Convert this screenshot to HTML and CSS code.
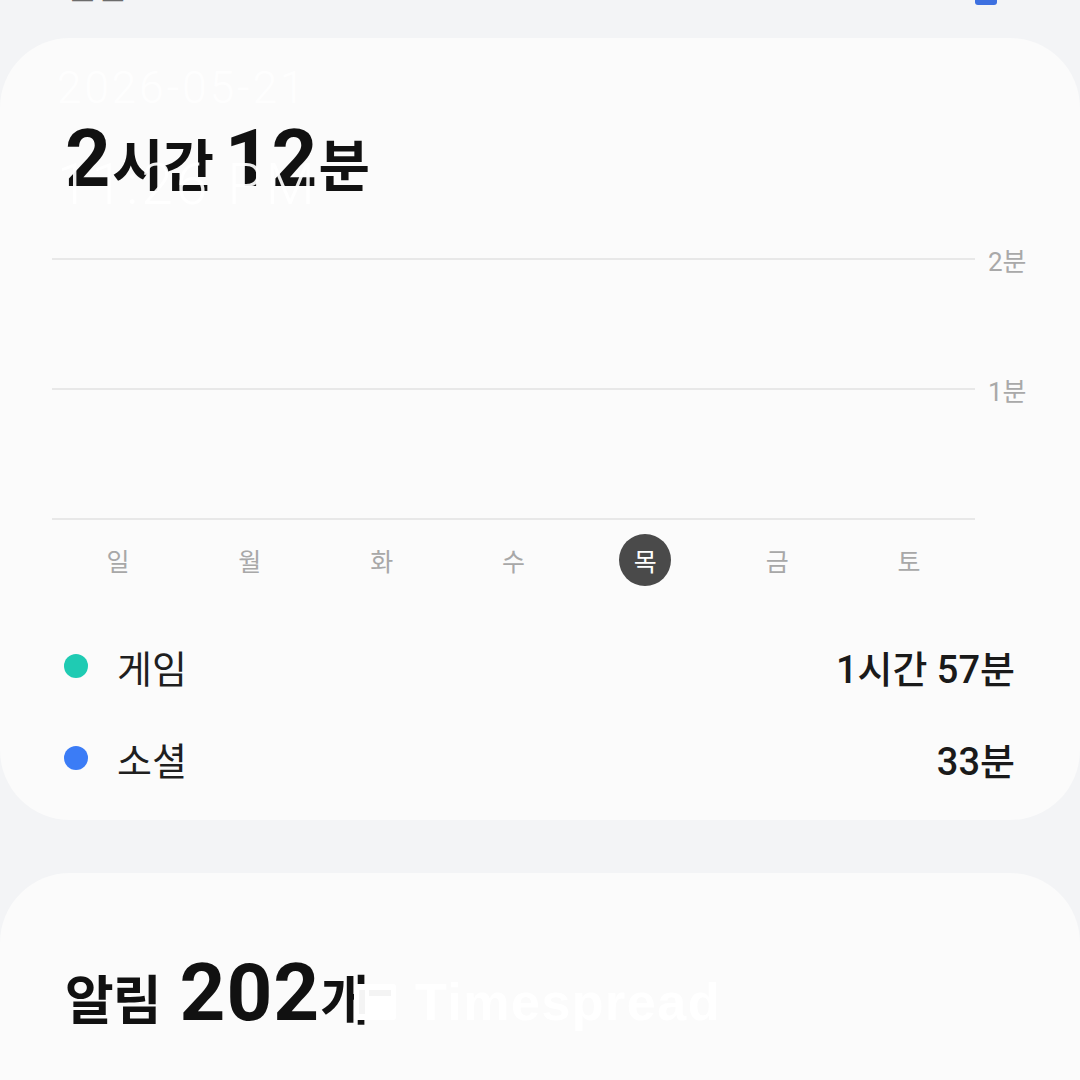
FILE: index.html
```html
<!DOCTYPE html>
<html>
	<head>
		<title>디지털 웰빙</title>
		<meta name="viewport" content="width=device-width, initial-scale=1.0"/>
		<link rel="stylesheet" href="styles.css">
	</head>
	<body>
		<header class='topbar'>
			<span class='topbar-title'>일간</span>
			<span class='topbar-icon'></span>
		</header>

		<section class='card usage'>
			<h1 class='total'><b>2</b>시간 <b>12</b>분</h1>
			<div class='chart'>
				<div class='gridrow'><span class='line'></span><span class='tick'>2분</span></div>
				<div class='gridrow'><span class='line'></span><span class='tick'>1분</span></div>
				<div class='gridrow'><span class='line'></span><span class='tick'></span></div>
			</div>
			<ul class='days'>
				<li>일</li>
				<li>월</li>
				<li>화</li>
				<li>수</li>
				<li class='today'><span>목</span></li>
				<li>금</li>
				<li>토</li>
			</ul>
			<ul class='legend'>
				<li><span class='dot game'></span><span class='name'>게임</span><span class='time'>1시간 57분</span></li>
				<li><span class='dot social'></span><span class='name'>소셜</span><span class='time'>33분</span></li>
			</ul>
		</section>

		<section class='card notes'>
			<h1 class='total'>알림 <b>202</b>개</h1>
		</section>

		<div class='stamp'>
			<div class='stamp-date'>2026-05-21</div>
			<div class='stamp-time'>11:26 PM</div>
		</div>
		<div class='brand'>
			<svg width="44" height="40" viewBox="0 0 44 40">
				<rect x="1" y="2" width="42" height="36" rx="3" fill="#ffffff"/>
				<rect x="6" y="8" width="6" height="24" fill="#f4f4f4"/>
				<rect x="16" y="8" width="22" height="6" fill="#f4f4f4"/>
			</svg>
			<span>Timespread</span>
		</div>
	</body>
</html>
```

FILE: styles.css
```css
* {
	box-sizing:border-box;
	margin:0;
	padding:0;
}
body {
	width:1080px;
	height:1080px;
	overflow:hidden;
	position:relative;
	background-color:#f3f4f6;
	font-family: Roboto, 'Noto Sans CJK KR', sans-serif;
	color:#1c1c1c;
}

.topbar {
	display:flex;
	justify-content:space-between;
	align-items:flex-end;
	height:40px;
	margin-top:-35px;
	padding:0 83px 0 65px;
}
.topbar-title {
	font-family:'Noto Sans CJK KR', sans-serif;
	font-size:34px;
	line-height:40px;
	color:#6c6c6c;
}
.topbar-icon {
	width:22px;
	height:40px;
	border-radius:3px;
	background-color:#3d70e0;
}

.card {
	background-color:#fbfbfb;
	border-radius:70px;
}
.usage {
	margin-top:33px;
	height:782px;
	padding:81px 52px 0 52px;
}

.total {
	font-family:'Noto Sans CJK KR', sans-serif;
	font-size:56px;
	font-weight:700;
	line-height:80px;
	height:80px;
	padding-left:13px;
	letter-spacing:-1px;
	color:#111;
}
.total b {
	font-family:Roboto, sans-serif;
	font-size:80px;
	font-weight:700;
	letter-spacing:1px;
}

.chart {
	display:flex;
	flex-direction:column;
	gap:100px;
	margin-top:45px;
}
.gridrow {
	display:flex;
	align-items:center;
	height:30px;
}
.line {
	flex:1;
	height:1.5px;
	background-color:#e8e8e8;
}
.tick {
	width:53px;
	padding-left:13px;
	font-size:26px;
	color:#a9a9a9;
	font-family:Roboto, 'Noto Sans CJK KR', sans-serif;
}

.days {
	list-style:none;
	display:grid;
	grid-template-columns:repeat(7, 1fr);
	width:923px;
	margin-top:0;
	height:52px;
}
.days li {
	display:flex;
	align-items:center;
	justify-content:center;
	font-family:'Noto Sans CJK KR', sans-serif;
	font-size:25px;
	color:#a8a8a8;
}
.days .today span {
	display:flex;
	align-items:center;
	justify-content:center;
	width:52px;
	height:52px;
	border-radius:50%;
	background-color:#4a4a4a;
	color:#fff;
}

.legend {
	list-style:none;
	display:flex;
	flex-direction:column;
	gap:32px;
	margin-top:50px;
	padding:0 13px 0 12px;
}
.legend li {
	display:flex;
	align-items:center;
	height:60px;
}
.dot {
	width:24px;
	height:24px;
	border-radius:50%;
	margin-right:29px;
}
.dot.game {
	background-color:#1fcbb3;
}
.dot.social {
	background-color:#3b7cf6;
}
.name {
	flex:1;
	font-family:'Noto Sans CJK KR', sans-serif;
	font-size:38px;
	color:#1f1f1f;
}
.time {
	font-family:Roboto, 'Noto Sans CJK KR', sans-serif;
	font-size:38px;
	font-weight:500;
	letter-spacing:0;
	color:#1a1a1a;
}

.notes {
	margin-top:53px;
	height:400px;
	padding:80px 52px 0 52px;
}
.notes .total {
	font-size:53px;
	word-spacing:8px;
}

.stamp {
	position:absolute;
	left:57px;
	top:60px;
	color:rgba(255,255,255,0.92);
	font-family:Roboto, sans-serif;
	font-weight:300;
}
.stamp-date {
	font-size:44px;
	line-height:56px;
	letter-spacing:3px;
}
.stamp-time {
	font-size:57px;
	line-height:70px;
	margin-top:34px;
	letter-spacing:3px;
}

.brand {
	position:absolute;
	left:353px;
	top:974px;
	display:flex;
	align-items:center;
	gap:18px;
	color:#ffffff;
	font-family:'Liberation Sans', Arial, sans-serif;
	font-weight:700;
	font-size:52px;
	line-height:56px;
	letter-spacing:1.5px;
}
```
